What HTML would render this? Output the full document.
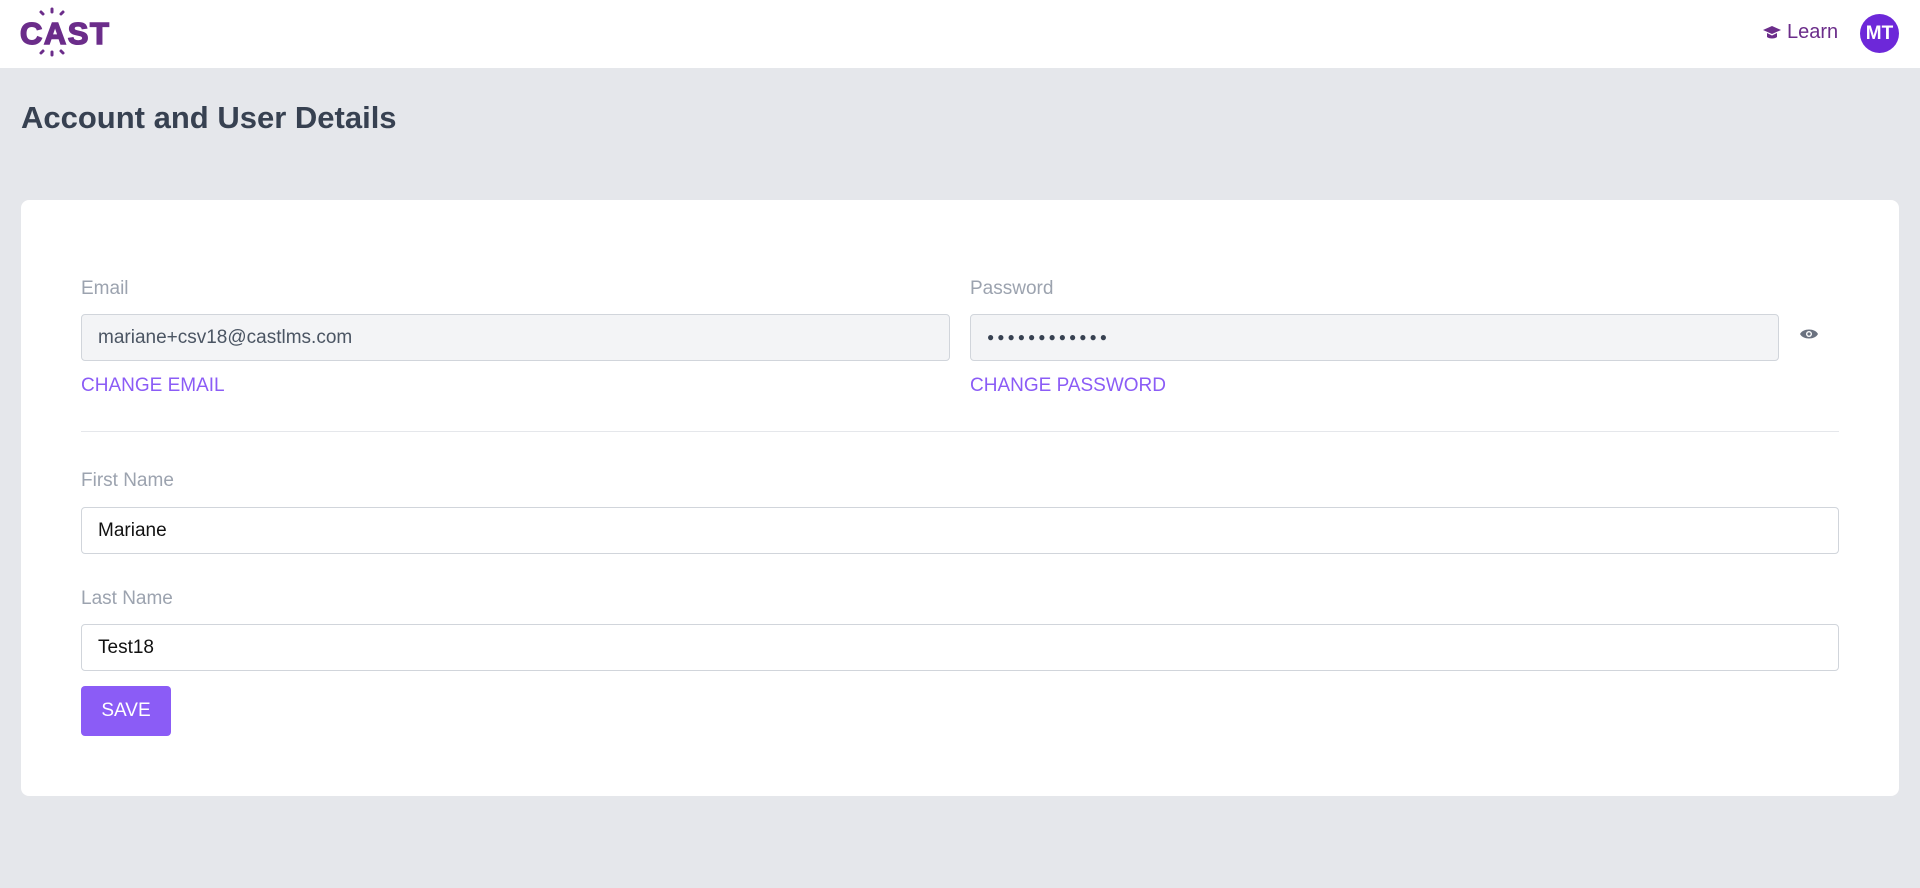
<!DOCTYPE html>
<html><head><meta charset="utf-8"><style>
*{box-sizing:border-box;margin:0;padding:0}
body{width:1920px;height:888px;background:#e5e7eb;font-family:"Liberation Sans",sans-serif;position:relative;overflow:hidden}
.hdr{position:absolute;left:0;top:0;width:1920px;height:68px;background:#fff}
.abs{position:absolute}
.lbl{position:absolute;color:#9ca3af;font-size:19px;line-height:22px}
.inp{position:absolute;height:47px;border:1px solid #d1d5db;border-radius:4px;font-size:19px;line-height:45px;padding-left:16px;color:#111}
.ro{background:#f3f4f6;color:#4b5563}
.lnk{position:absolute;color:#8b5cf6;font-size:19px;line-height:22px}
</style></head><body>
<div class="hdr">
<svg class="abs" style="left:18px;top:6px" width="92" height="52" viewBox="0 0 92 52">
<g stroke="#6b2d8a" stroke-width="3" stroke-linecap="round">
<line x1="34" y1="3" x2="34" y2="6"/><line x1="23" y1="6" x2="25" y2="8"/><line x1="45" y1="6" x2="43" y2="8"/>
<line x1="34" y1="46" x2="34" y2="49"/><line x1="23" y1="47" x2="25" y2="45"/><line x1="45" y1="47" x2="43" y2="45"/>
</g>
<text x="2" y="38" font-family="Liberation Sans" font-weight="bold" font-size="31" fill="#6b2d8a" stroke="#6b2d8a" stroke-width="1.5" letter-spacing="1.5">CAST</text>
</svg>
<svg class="abs" style="left:1763px;top:26px" width="18" height="14" viewBox="0 0 18 14"><path d="M9 0L18 4 9 8 0 4z" fill="#6b2d8a"/><path d="M4 7v4c2 2 8 2 10 0V7L9 9.5z" fill="#6b2d8a"/></svg>
<div class="abs" style="left:1787px;top:21px;font-size:20px;color:#6b2d8a">Learn</div>
<div class="abs" style="left:1860px;top:14px;width:39px;height:39px;border-radius:50%;background:#6d28d9;color:#fff;font-weight:bold;font-size:19px;text-align:center;line-height:39px">MT</div>
</div>
<div class="abs" style="left:21px;top:100px;font-size:31px;font-weight:bold;color:#374151">Account and User Details</div>
<div class="abs" style="left:21px;top:200px;width:1878px;height:596px;background:#fff;border-radius:8px"></div>
<div class="lbl" style="left:81px;top:278px">Email</div>
<div class="inp ro" style="left:81px;top:314px;width:869px">mariane+csv18@castlms.com</div>
<div class="lnk" style="left:81px;top:375px">CHANGE EMAIL</div>
<div class="lbl" style="left:970px;top:278px">Password</div>
<div class="inp ro" style="left:970px;top:314px;width:809px;letter-spacing:3px;font-size:12px;color:#374151">●●●●●●●●●●●●</div>
<svg class="abs" style="left:1800px;top:327px" width="18" height="14" viewBox="0 0 18 14"><path d="M0 7C3 1 15 1 18 7 15 13 3 13 0 7z" fill="#6b7280"/><circle cx="9" cy="7" r="3" fill="#fff"/><circle cx="9" cy="7" r="1.6" fill="#6b7280"/></svg>
<div class="lnk" style="left:970px;top:375px">CHANGE PASSWORD</div>
<div class="abs" style="left:81px;top:431px;width:1758px;height:1px;background:#e5e7eb"></div>
<div class="lbl" style="left:81px;top:470px">First Name</div>
<div class="inp" style="left:81px;top:507px;width:1758px">Mariane</div>
<div class="lbl" style="left:81px;top:588px">Last Name</div>
<div class="inp" style="left:81px;top:624px;width:1758px">Test18</div>
<div class="abs" style="left:81px;top:686px;width:90px;height:50px;background:#8b5cf6;border-radius:4px;color:#fff;font-size:19px;text-align:center;line-height:50px">SAVE</div>
</body></html>
